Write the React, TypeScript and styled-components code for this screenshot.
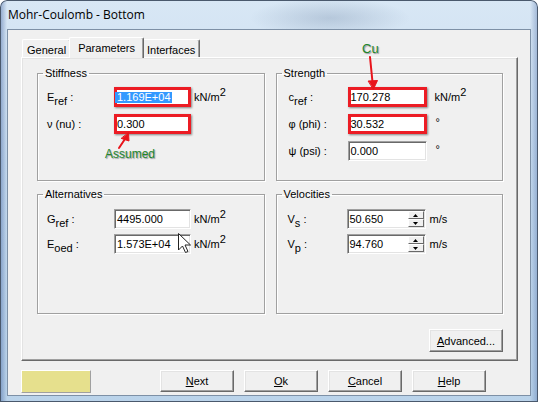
import React from "react";
import styled, { createGlobalStyle } from "styled-components";

const GlobalStyle = createGlobalStyle`
  html, body { margin: 0; padding: 0; background: #ffffff; }
  body {
    font-family: "Liberation Sans", Arial, sans-serif;
    font-size: 11px;
    color: #000;
  }
  * { box-sizing: border-box; }
`;

const Window = styled.div`
  position: relative;
  width: 538px;
  height: 402px;
  display: flex;
  flex-direction: column;
  border-radius: 7px 7px 0 0;
  overflow: hidden;
  background:
    radial-gradient(ellipse 80px 20px at 330px 18px, rgba(70, 95, 130, 0.22), rgba(70, 95, 130, 0)),
    linear-gradient(90deg, rgba(50, 85, 150, 0.45) 0px, rgba(50, 85, 150, 0) 7px, rgba(0, 0, 0, 0) 530px, rgba(50, 85, 150, 0.35) 538px),
    linear-gradient(180deg, #d8e7f5 0%, #c6dbef 40%, #bad3ea 100%);
  box-shadow: inset 0 0 0 1px #4a596d;
`;

const TitleBar = styled.div`
  height: 29px;
  flex: none;
  padding: 7px 0 0 8px;
`;

const Title = styled.span`
  font-family: "Open Sans", "Noto Sans", sans-serif;
  font-size: 12px;
  line-height: 16px;
  color: #000;
`;

const Client = styled.div`
  flex: 1;
  margin: 0 7px 6px;
  border: 1px solid #7d90a6;
  background: #f0f0f0;
  display: flex;
  flex-direction: column;
  padding: 0 12px 0 13px;
`;

const TabStrip = styled.div`
  display: flex;
  align-items: flex-end;
  height: 20px;
  margin: 7px 0 0 1px;
`;

const Tab = styled.div<{ $active?: boolean }>`
  position: relative;
  z-index: ${(p) => (p.$active ? 2 : 1)};
  height: ${(p) => (p.$active ? 21 : 18)}px;
  margin: ${(p) => (p.$active ? "0 -2px -1px" : "0")};
  padding: 4px ${(p) => (p.$active ? 8 : 4)}px 0;
  line-height: 13px;
  background: #f0f0f0;
  border-top: 1px solid #ffffff;
  border-left: 1px solid #ffffff;
  border-right: 1px solid #696969;
  border-bottom: none;
  border-radius: 2px 2px 0 0;
  box-shadow: inset -1px 0 0 #a0a0a0;
  white-space: nowrap;
`;

const Panel = styled.div`
  height: 304px;
  flex: none;
  border-top: 1px solid #ffffff;
  border-left: 1px solid #ffffff;
  border-right: 1px solid #696969;
  border-bottom: 1px solid #696969;
  box-shadow: inset -1px -1px 0 #a0a0a0, inset 1px 1px 0 #e3e3e3;
  padding: 9px 14px 0 15px;
  display: flex;
  flex-direction: column;
`;

const GroupGrid = styled.div`
  display: grid;
  grid-template-columns: 1fr 1fr;
  grid-template-rows: 114px 126px;
  column-gap: 11px;
  row-gap: 7px;
`;

const Group = styled.fieldset`
  margin: 0;
  padding: 0;
  min-width: 0;
  border: 1px solid #a0a0a0;
  box-shadow: 1px 1px 0 #ffffff, inset 1px 1px 0 #ffffff;
`;

const Legend = styled.legend`
  margin-left: 5px;
  padding: 0 2px;
  line-height: 13px;
  height: 13px;
`;

const GroupBody = styled.div<{
  $top: number;
  $left: number;
  $labelW: number;
  $inputW: number;
  $rowGap: number;
}>`
  display: grid;
  grid-template-columns: ${(p) => p.$labelW}px ${(p) => p.$inputW}px auto;
  grid-auto-rows: 20px;
  row-gap: ${(p) => p.$rowGap}px;
  align-items: center;
  padding: ${(p) => p.$top}px 0 0 ${(p) => p.$left}px;
`;

const Label = styled.span`
  line-height: 13px;
  white-space: nowrap;
`;

const Sub = styled.span`
  vertical-align: -4px;
  line-height: 0;
`;

const Sup = styled.span`
  vertical-align: 5px;
  line-height: 0;
`;

const Unit = styled.span<{ $gap: number; $raised?: boolean }>`
  padding-left: ${(p) => p.$gap}px;
  line-height: 13px;
  white-space: nowrap;
  align-self: ${(p) => (p.$raised ? "start" : "center")};
  padding-top: ${(p) => (p.$raised ? 2 : 0)}px;
`;

const Field = styled.div<{ $marked?: boolean }>`
  height: 20px;
  width: 100%;
  display: flex;
  align-items: center;
  background: #ffffff;
  line-height: 16px;
  white-space: nowrap;
  ${(p) =>
    p.$marked
      ? `
    border: 3px solid #ec1c24;
    padding-left: 0;
    box-shadow: 1px 1px 2px rgba(0, 0, 0, 0.45);
  `
      : `
    border-top: 1px solid #a0a0a0;
    border-left: 1px solid #a0a0a0;
    border-right: 1px solid #ffffff;
    border-bottom: 1px solid #ffffff;
    box-shadow: inset 1px 1px 0 #696969, inset -1px -1px 0 #e3e3e3;
    padding-left: 2px;
  `}
`;

const Value = styled.span`
  flex: 1;
`;

const Selected = styled.span`
  display: inline-block;
  background: #3399ff;
  color: #ffffff;
  line-height: 11px;
  margin-left: -2px;
  padding: 0 1px 0 2px;
`;

const Spinner = styled.div`
  width: 16px;
  height: 16px;
  margin-right: 1px;
  display: flex;
  flex-direction: column;
`;

const SpinHalf = styled.div`
  flex: 1;
  display: flex;
  align-items: center;
  justify-content: center;
  background: #f0f0f0;
  border-top: 1px solid #ffffff;
  border-left: 1px solid #ffffff;
  border-right: 1px solid #696969;
  border-bottom: 1px solid #696969;
`;

const PanelActions = styled.div`
  display: flex;
  justify-content: flex-end;
  margin-top: 15px;
`;

const Button = styled.div<{ $tall?: boolean }>`
  width: 74px;
  height: ${(p) => (p.$tall ? 23 : 22)}px;
  display: flex;
  align-items: center;
  justify-content: center;
  background: #f0f0f0;
  border-top: 1px solid #ffffff;
  border-left: 1px solid #ffffff;
  border-right: 1px solid #696969;
  border-bottom: 1px solid #696969;
  box-shadow: inset -1px -1px 0 #a0a0a0, inset 1px 1px 0 #e3e3e3;
  white-space: nowrap;
`;

const Footer = styled.div`
  display: flex;
  align-items: flex-start;
  margin-top: 9px;
`;

const Swatch = styled.div`
  width: 70px;
  height: 23px;
  background: #e6e08d;
  border-top: 1px solid #ffffff;
  border-left: 1px solid #ffffff;
  border-right: 1px solid #a0a0a0;
  border-bottom: 1px solid #a0a0a0;
`;

const ButtonRow = styled.div`
  display: flex;
  gap: 10px;
  margin-left: 69px;
`;

const Overlay = styled.div`
  position: absolute;
  inset: 0;
  pointer-events: none;
`;

const Note = styled.span<{ $x: number; $y: number; $size: number }>`
  position: absolute;
  left: ${(p) => p.$x}px;
  top: ${(p) => p.$y}px;
  font-size: ${(p) => p.$size}px;
  line-height: ${(p) => p.$size + 2}px;
  color: #23862a;
  text-shadow: 1px 1px 1px rgba(40, 40, 60, 0.45);
  white-space: nowrap;
`;

const Drawing = styled.svg`
  position: absolute;
  left: 0;
  top: 0;
`;

const Up = () => (
  <svg width="5" height="3" viewBox="0 0 5 3">
    <path d="M2.5 0 L5 3 L0 3 Z" fill="#000" />
  </svg>
);
const Down = () => (
  <svg width="5" height="3" viewBox="0 0 5 3">
    <path d="M0 0 L5 0 L2.5 3 Z" fill="#000" />
  </svg>
);

const SpinField: React.FC<{ value: string }> = ({ value }) => (
  <Field>
    <Value>{value}</Value>
    <Spinner>
      <SpinHalf>
        <Up />
      </SpinHalf>
      <SpinHalf>
        <Down />
      </SpinHalf>
    </Spinner>
  </Field>
);

const KNm2 = () => (
  <>
    kN/m<Sup>2</Sup>
  </>
);

export default function App() {
  return (
    <>
      <GlobalStyle />
      <Window>
        <TitleBar>
          <Title>Mohr-Coulomb - Bottom</Title>
        </TitleBar>
        <Client>
          <TabStrip>
            <Tab>General</Tab>
            <Tab $active>Parameters</Tab>
            <Tab>Interfaces</Tab>
          </TabStrip>
          <Panel>
            <GroupGrid>
              <Group>
                <Legend>Stiffness</Legend>
                <GroupBody $top={7} $left={9} $labelW={67} $inputW={77} $rowGap={7}>
                  <Label>
                    E<Sub>ref</Sub> :
                  </Label>
                  <Field $marked>
                    <Value>
                      <Selected>1.169E+04</Selected>
                    </Value>
                  </Field>
                  <Unit $gap={3}>
                    <KNm2 />
                  </Unit>
                  <Label>ν (nu) :</Label>
                  <Field $marked>
                    <Value>0.300</Value>
                  </Field>
                  <span />
                </GroupBody>
              </Group>
              <Group>
                <Legend>Strength</Legend>
                <GroupBody $top={7} $left={12} $labelW={59} $inputW={79} $rowGap={7}>
                  <Label>
                    c<Sub>ref</Sub> :
                  </Label>
                  <Field $marked>
                    <Value>170.278</Value>
                  </Field>
                  <Unit $gap={8}>
                    <KNm2 />
                  </Unit>
                  <Label>φ (phi) :</Label>
                  <Field $marked>
                    <Value>30.532</Value>
                  </Field>
                  <Unit $gap={9} $raised>
                    °
                  </Unit>
                  <Label>ψ (psi) :</Label>
                  <Field>
                    <Value>0.000</Value>
                  </Field>
                  <Unit $gap={9} $raised>
                    °
                  </Unit>
                </GroupBody>
              </Group>
              <Group>
                <Legend>Alternatives</Legend>
                <GroupBody $top={8} $left={9} $labelW={67} $inputW={77} $rowGap={5}>
                  <Label>
                    G<Sub>ref</Sub> :
                  </Label>
                  <Field>
                    <Value>4495.000</Value>
                  </Field>
                  <Unit $gap={3}>
                    <KNm2 />
                  </Unit>
                  <Label>
                    E<Sub>oed</Sub> :
                  </Label>
                  <Field>
                    <Value>1.573E+04</Value>
                  </Field>
                  <Unit $gap={3}>
                    <KNm2 />
                  </Unit>
                </GroupBody>
              </Group>
              <Group>
                <Legend>Velocities</Legend>
                <GroupBody $top={8} $left={11} $labelW={59} $inputW={79} $rowGap={5}>
                  <Label>
                    V<Sub>s</Sub> :
                  </Label>
                  <SpinField value="50.650" />
                  <Unit $gap={4}>m/s</Unit>
                  <Label>
                    V<Sub>p</Sub> :
                  </Label>
                  <SpinField value="94.760" />
                  <Unit $gap={4}>m/s</Unit>
                </GroupBody>
              </Group>
            </GroupGrid>
            <PanelActions>
              <Button $tall>
                <u>A</u>dvanced...
              </Button>
            </PanelActions>
          </Panel>
          <Footer>
            <Swatch />
            <ButtonRow>
              <Button>
                <u>N</u>ext
              </Button>
              <Button>
                <u>O</u>k
              </Button>
              <Button>
                <u>C</u>ancel
              </Button>
              <Button>
                <u>H</u>elp
              </Button>
            </ButtonRow>
          </Footer>
        </Client>
        <Overlay>
          <Note $x={362} $y={41} $size={13}>
            Cu
          </Note>
          <Note $x={105} $y={147} $size={12}>
            Assumed
          </Note>
          <Drawing width={538} height={402} viewBox="0 0 538 402">
            <g stroke="#e8141b" strokeWidth={2} fill="#e8141b" strokeLinecap="round">
              <line x1={370} y1={57} x2={372.5} y2={82} />
              <path d="M368.5 81 L377.5 80.5 L373.5 89 Z" strokeWidth={1} />
              <line x1={119} y1={148} x2={125} y2={139} />
              <path d="M121.5 138.5 L129 141 L128.5 133 Z" strokeWidth={1} />
            </g>
            <path
              d="M178.5 233.5 L178.5 250 L182.5 246 L185.5 252.5 L188 251.5 L185 245 L190.5 245 Z"
              fill="#ffffff"
              stroke="#222"
              strokeWidth={1}
              strokeLinejoin="round"
            />
          </Drawing>
        </Overlay>
      </Window>
    </>
  );
}
